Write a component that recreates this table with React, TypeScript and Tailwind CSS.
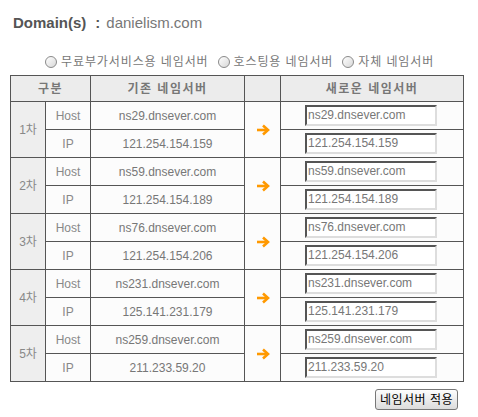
import React from "react";

const groups = [
  { n: "1차", host: "ns29.dnsever.com", ip: "121.254.154.159" },
  { n: "2차", host: "ns59.dnsever.com", ip: "121.254.154.189" },
  { n: "3차", host: "ns76.dnsever.com", ip: "121.254.154.206" },
  { n: "4차", host: "ns231.dnsever.com", ip: "125.141.231.179" },
  { n: "5차", host: "ns259.dnsever.com", ip: "211.233.59.20" },
];

const font = { fontFamily: '"Liberation Sans", "Noto Sans CJK KR", sans-serif' };

function Radio({ label }: { label: string }) {
  return (
    <span className="inline-flex items-center gap-[4px]">
      <span className="inline-block w-[12px] h-[12px] rounded-full border border-[#8a8a8a] bg-gradient-to-br from-[#ffffff] to-[#d8d8d8]" />
      <span className="tracking-[0.9px]">{label}</span>
    </span>
  );
}

function Input({ value }: { value: string }) {
  return (
    <div className="ml-[24px] w-[132px] h-[21px] border-2 border-t-[#555] border-l-[#555] border-r-[#ddd] border-b-[#ddd] bg-white text-left pl-[1px] leading-[17px] text-[12px] text-[#777]">
      {value}
    </div>
  );
}

function Arrow() {
  return (
    <svg width="14" height="12" viewBox="0 0 14 12" className="inline-block">
      <path d="M1 6 H11" stroke="#ff9900" strokeWidth="2.6" fill="none" />
      <path d="M7 1.5 L12 6 L7 10.5" stroke="#ff9900" strokeWidth="2.6" fill="none" strokeLinejoin="miter" />
    </svg>
  );
}

export default function App() {
  const td = "border border-[#555] text-center p-0";
  return (
    <div className="w-[478px] h-[417px] bg-white relative text-[12px] text-[#666]" style={font}>
      <div className="pt-[13px] pl-[13px] text-[15px] text-[#777] leading-[20px]">
        <span className="font-bold text-[#555]">Domain(s)</span>
        <span className="font-bold text-[#555] ml-[9px] mr-[6px]">:</span>
        <span>danielism.com</span>
      </div>
      <div className="mt-[22px] flex gap-[9px] pl-[45px] text-[12px] text-[#777] leading-[14px]">
        <Radio label="무료부가서비스용 네임서버" />
        <Radio label="호스팅용 네임서버" />
        <Radio label="자체 네임서버" />
      </div>
      <table className="ml-[10px] mt-[6px] border-collapse border border-[#555] w-[453px] table-fixed">
        <colgroup>
          <col className="w-[35px]" />
          <col className="w-[45px]" />
          <col className="w-[154px]" />
          <col className="w-[36px]" />
          <col className="w-[183px]" />
        </colgroup>
        <thead>
          <tr className="h-[26px] bg-[#ececec]">
            <th colSpan={2} className={`${td} font-bold text-[#777] tracking-[1.5px]`}>구분</th>
            <th className={`${td} font-bold text-[#777] tracking-[1.5px]`}>기존 네임서버</th>
            <th className={td}></th>
            <th className={`${td} font-bold text-[#777] tracking-[1.5px]`}>새로운 네임서버</th>
          </tr>
        </thead>
        <tbody>
          {groups.map((g) => (
            <React.Fragment key={g.n}>
              <tr className="h-[28px]">
                <td rowSpan={2} className={`${td} bg-[#eeeeee] text-[#888]`}>{g.n}</td>
                <td className={`${td} bg-[#fcfcfc] text-[#888]`}>Host</td>
                <td className={`${td} bg-[#fcfcfc] text-[#777]`}>{g.host}</td>
                <td rowSpan={2} className={`${td} bg-[#fcfcfc]`}>
                  <Arrow />
                </td>
                <td className={`${td} bg-[#fcfcfc]`}>
                  <Input value={g.host} />
                </td>
              </tr>
              <tr className="h-[28px]">
                <td className={`${td} bg-[#fcfcfc] text-[#888]`}>IP</td>
                <td className={`${td} bg-[#fcfcfc] text-[#777]`}>{g.ip}</td>
                <td className={`${td} bg-[#fcfcfc]`}>
                  <Input value={g.ip} />
                </td>
              </tr>
            </React.Fragment>
          ))}
        </tbody>
      </table>
      <div className="flex justify-end pr-[20px] mt-[7px]">
        <button className="h-[21px] px-[4px] rounded-[3px] border border-[#777] bg-gradient-to-b from-[#fdfdfd] to-[#dcdcdc] text-[12px] text-black leading-[18px] tracking-[0.5px]">
          네임서버 적용
        </button>
      </div>
    </div>
  );
}
